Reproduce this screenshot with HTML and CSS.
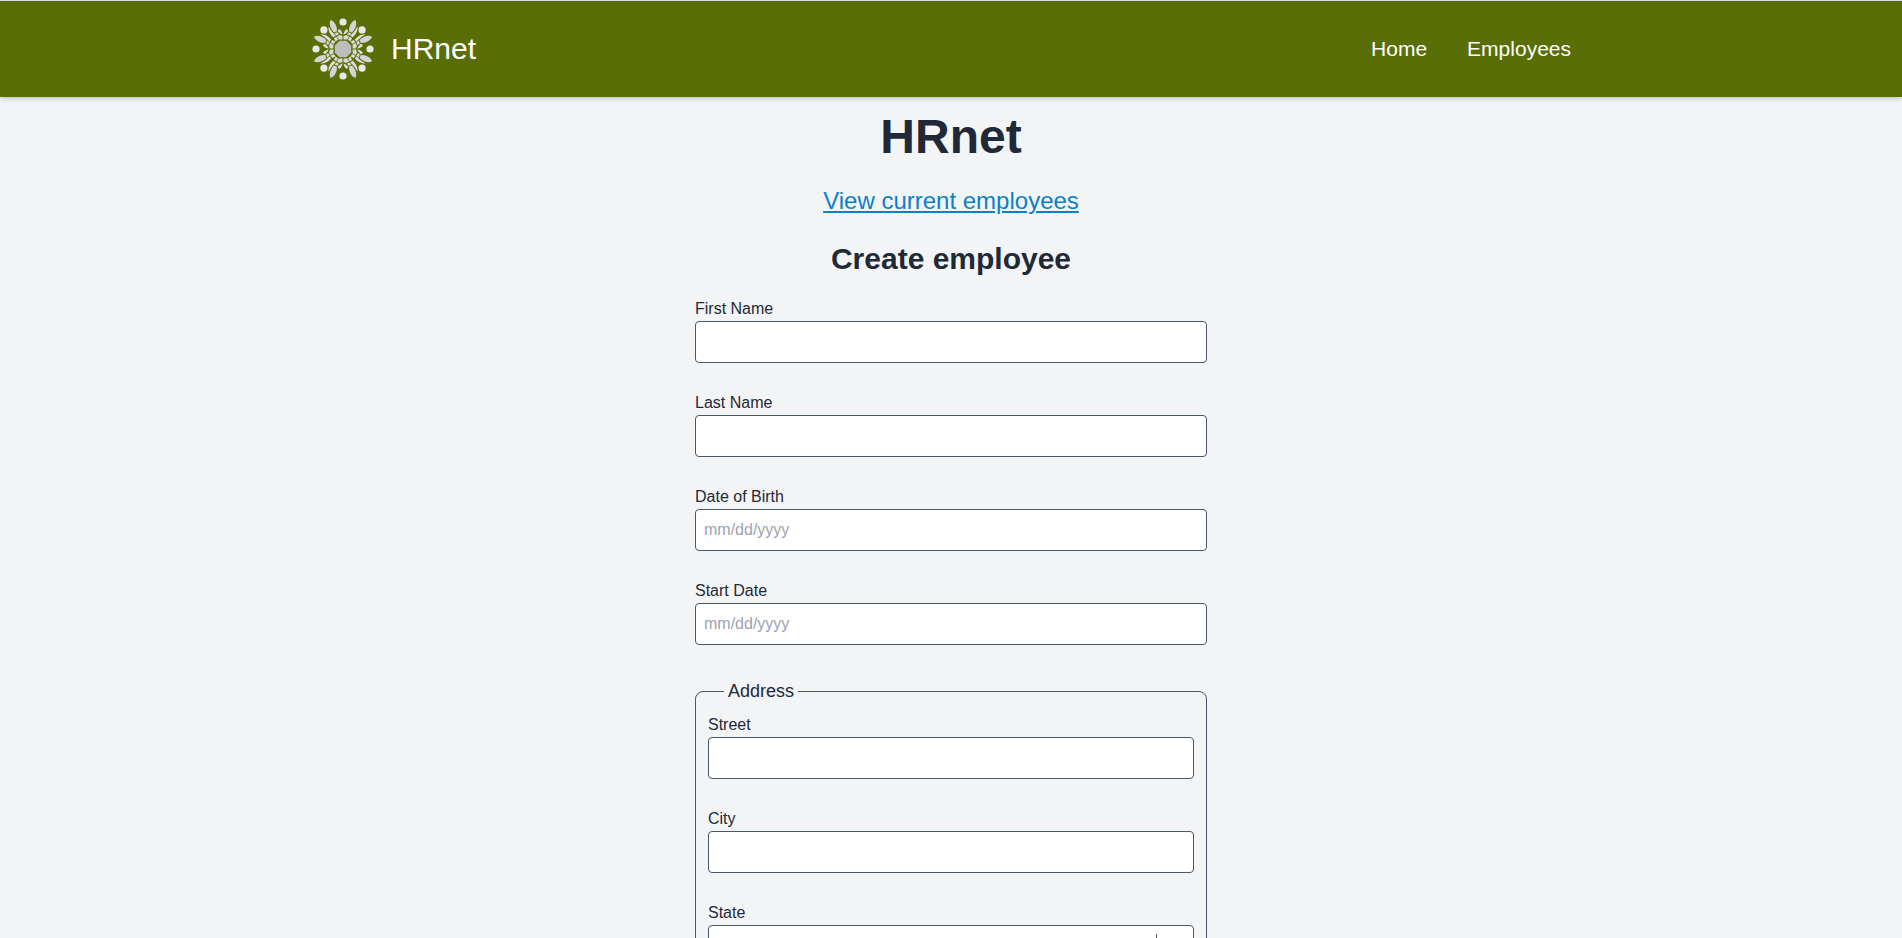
FILE: index.html
```html
<!DOCTYPE html>
<html lang="en">
<head>
<meta charset="utf-8">
<title>HRnet</title>
<link rel="stylesheet" href="styles.css">
</head>
<body>
<header class="site-header">
  <div class="header-inner">
    <a class="brand" href="#">
      <svg class="logo" viewBox="-32 -32 64 64" aria-hidden="true">
        <defs>
          <g id="half">
            <path d="M12.3-29 C8.8-28 5.4-22.6 6.2-17.6 L9-16.6 C12.4-20 14.6-25.6 12.3-29Z" fill="#d4d4d4"/>
            <path d="M14.4-22.8 C15-18.4 13-14.6 9.6-11.8 L7.2-13.6 C10.4-16 12.8-19.4 14.4-22.8Z" fill="#dedede"/>
            <path d="M5.6-16.8 L8.4-15.8 L6.6-13.4 L4-14.8Z" fill="#d8d8d8"/>
            <path d="M0.5-14.2 L3-15.8 L5.2-17.6 C4.8-19 4.4-19.6 3.6-20 C1.8-18.4 0.7-16.6 0.5-14.2Z" fill="#dcdcdc"/>
            <path d="M0.5-13 L3.4-14 L6-12.6 L4.4-9.6 L0.5-9.6Z" fill="#d8d8d8"/>
            <path d="M6.8-12.4 L9-10.8 L7.4-7.6 L5-9.2Z" fill="#dcdcdc"/>
          </g>
          <g id="ray">
            <circle cx="0" cy="-27" r="3.6" fill="#e8e8e8"/>
            <circle cx="19.1" cy="-19.1" r="3.6" fill="#e8e8e8"/>
            <use href="#half"/>
            <use href="#half" transform="scale(-1 1)"/>
          </g>
        </defs>
        <use href="#ray"/>
        <use href="#ray" transform="rotate(90)"/>
        <use href="#ray" transform="rotate(180)"/>
        <use href="#ray" transform="rotate(270)"/>
        <path d="M-3.4-8.2H3.4L8.2-3.4V3.4L3.4 8.2H-3.4L-8.2 3.4V-3.4Z" fill="#bdbdbd"/>
      </svg>
      <span>HRnet</span>
    </a>
    <nav class="nav">
      <a href="#">Home</a>
      <a href="#">Employees</a>
    </nav>
  </div>
</header>
<main class="page">
  <h1 class="title">HRnet</h1>
  <a class="view-link" href="#">View current employees</a>
  <h2 class="subtitle">Create employee</h2>
  <form class="form">
    <div class="field"><label for="first">First Name</label><input class="control" id="first" type="text"></div>
    <div class="field"><label for="last">Last Name</label><input class="control" id="last" type="text"></div>
    <div class="field"><label for="birth">Date of Birth</label><input class="control" id="birth" type="text" placeholder="mm/dd/yyyy"></div>
    <div class="field"><label for="start">Start Date</label><input class="control" id="start" type="text" placeholder="mm/dd/yyyy"></div>
    <fieldset class="address">
      <legend>Address</legend>
      <div class="field"><label for="street">Street</label><input class="control" id="street" type="text"></div>
      <div class="field"><label for="city">City</label><input class="control" id="city" type="text"></div>
      <div class="field"><label for="state">State</label>
        <div class="control select-box"><select id="state"><option></option></select><span class="divider"></span><svg class="chevron" viewBox="0 0 20 20" aria-hidden="true"><path d="M5 8l5 5 5-5" fill="none" stroke="#4a5568" stroke-width="2"/></svg></div>
      </div>
    </fieldset>
  </form>
</main>
</body>
</html>
```

FILE: styles.css
```css
*, *::before, *::after { box-sizing: border-box; }
body {
  margin: 0;
  background: #f3f4f6;
  color: #1f2937;
  font: 16px/24px "Liberation Sans", Arial, sans-serif;
}
.site-header {
  background: #5a6e07;
  border-top: 1px solid #d6dadf;
  box-shadow: 0 1px 6px rgba(0, 0, 0, 0.25);
}
.header-inner {
  max-width: 1280px;
  margin: 0 auto;
  padding: 16px 0;
  display: flex;
  align-items: center;
  justify-content: space-between;
}
.brand {
  display: flex;
  align-items: center;
  gap: 16px;
  color: #fff;
  font-size: 30px;
  line-height: 36px;
  text-decoration: none;
}
.logo { width: 64px; height: 64px; }
.nav { display: flex; }
.nav a {
  padding: 0 20px;
  color: #fff;
  font-size: 21px;
  line-height: 28px;
  text-decoration: none;
}
.page {
  display: flex;
  flex-direction: column;
  align-items: center;
  padding: 16px 16px 0;
}
.title { margin: 0 0 24px; font-size: 48px; line-height: 48px; }
.view-link {
  margin-bottom: 24px;
  color: #0e80c4;
  font-size: 24px;
  line-height: 32px;
}
.subtitle { margin: 0 0 20px; font-size: 30px; line-height: 36px; }
.form { width: 100%; max-width: 512px; }
.field { margin-bottom: 28px; }
.field label { display: block; }
.control {
  display: block;
  width: 100%;
  height: 42px;
  padding: 8px;
  border: 1px solid #4a5568;
  border-radius: 4px;
  background: #fff;
  color: inherit;
  font: inherit;
}
.control::placeholder { color: #9ca3af; opacity: 1; }
.address {
  margin: 32px 0 0;
  padding: 8px 12px 0;
  border: 1px solid #4a5568;
  border-radius: 8px;
}
.address legend {
  margin-left: 16px;
  padding: 0 4px;
  font-size: 18px;
  line-height: 28px;
}
.select-box { display: flex; align-items: center; padding-right: 8px; }
.select-box select {
  flex: 1;
  appearance: none;
  border: 0;
  background: none;
  font: inherit;
}
.divider { width: 1px; align-self: stretch; background: #4a5568; }
.chevron { width: 20px; height: 20px; margin-left: 8px; }
```
